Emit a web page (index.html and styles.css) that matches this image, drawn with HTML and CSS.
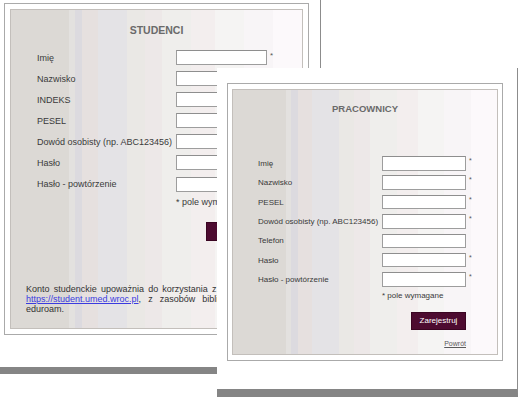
FILE: index.html
```html
<!DOCTYPE html>
<html lang="pl">
<head>
<meta charset="utf-8">
<title>Rejestracja</title>
<link rel="stylesheet" href="styles.css">
</head>
<body>
<div class="window window--students">
  <div class="frame">
    <div class="panel">
      <h2 class="title">STUDENCI</h2>
      <div class="form">
        <label class="lbl">Imię</label><input class="inp" type="text"><span class="req">*</span>
        <label class="lbl">Nazwisko</label><input class="inp" type="text"><span class="req">*</span>
        <label class="lbl">INDEKS</label><input class="inp" type="text"><span class="req">*</span>
        <label class="lbl">PESEL</label><input class="inp" type="text"><span class="req">*</span>
        <label class="lbl">Dowód osobisty (np. ABC123456)</label><input class="inp" type="text"><span class="req">*</span>
        <label class="lbl">Hasło</label><input class="inp" type="text"><span class="req">*</span>
        <label class="lbl">Hasło - powtórzenie</label><input class="inp" type="text"><span class="req">*</span>
      </div>
      <div class="actions">
        <div class="note">* pole wymagane</div>
        <button class="submit" type="button">Zarejestruj</button>
        <a class="back" href="#">Powrót</a>
      </div>
      <p class="info">Konto studenckie upoważnia do korzystania z portalu studenta <a class="link" href="#">https://student.umed.wroc.pl</a>, z zasobów biblioteki oraz sieci eduroam.</p>
    </div>
  </div>
</div>

<div class="window window--staff">
  <div class="frame">
    <div class="panel">
      <h2 class="title">PRACOWNICY</h2>
      <div class="form">
        <label class="lbl">Imię</label><input class="inp" type="text"><span class="req">*</span>
        <label class="lbl">Nazwisko</label><input class="inp" type="text"><span class="req">*</span>
        <label class="lbl">PESEL</label><input class="inp" type="text"><span class="req">*</span>
        <label class="lbl">Dowód osobisty (np. ABC123456)</label><input class="inp" type="text"><span class="req">*</span>
        <label class="lbl">Telefon</label><input class="inp" type="text"><span class="req"></span>
        <label class="lbl">Hasło</label><input class="inp" type="text"><span class="req">*</span>
        <label class="lbl">Hasło - powtórzenie</label><input class="inp" type="text"><span class="req">*</span>
      </div>
      <div class="actions">
        <div class="note">* pole wymagane</div>
        <button class="submit" type="button">Zarejestruj</button>
        <a class="back" href="#">Powrót</a>
      </div>
    </div>
  </div>
</div>
</body>
</html>
```

FILE: styles.css
```css
html, body {
  margin: 0;
  padding: 0;
}
body {
  position: relative;
  width: 526px;
  height: 404px;
  overflow: hidden;
  background: #ffffff;
  font-family: "Liberation Sans", Arial, sans-serif;
  color: #3a3a3a;
}

/* windows placed on the free canvas */
.window {
  position: absolute;
  background: #ffffff;
  border-right: 1px solid #8c8c8c;
  border-bottom-style: solid;
  border-bottom-color: #858585;
}
.window--students {
  left: 0;
  top: 0;
  width: 316px;
  height: 364px;
  padding: 3px 0 0 4px;
  border-bottom-width: 7px;
}
.window--staff {
  left: 217px;
  top: 68px;
  width: 290px;
  height: 306px;
  padding: 15px 0 0 10px;
  border-bottom-width: 8px;
}

.frame {
  box-sizing: border-box;
  border: 1px solid #aaaaaa;
  background: #ffffff;
}
.window--students .frame {
  width: 305px;
  height: 332px;
  padding: 5px;
}
.window--staff .frame {
  width: 276px;
  height: 278px;
  padding: 5px 4px;
}

.panel {
  box-sizing: border-box;
  height: 100%;
  border: 1px solid #c3bfbb;
  background: linear-gradient(to right,
    #dcd9d5 0%, #dcd9d5 20%,
    #e3e1df 20%, #e3e1df 22%,
    #dcdadf 22%, #dcdadf 24.5%,
    #e6e0df 24.5%, #e6e0df 30%,
    #e4e3e6 30%, #e4e3e6 40%,
    #eae8e5 40%, #eae8e5 46%,
    #ede8e8 46%, #ede8e8 52%,
    #efeeec 52%, #efeeec 62%,
    #f3eeee 62%, #f3eeee 70%,
    #f5f4f3 70%, #f5f4f3 80%,
    #f8f5f7 80%, #f8f5f7 90%,
    #fcf9fb 90%, #fcf9fb 100%);
}

.title {
  margin: 0;
  text-align: center;
  font-weight: bold;
  color: #6a6a6a;
}
.window--students .title {
  padding-top: 14px;
  font-size: 10.5px;
  line-height: 12px;
}
.window--staff .title {
  padding-top: 12.5px;
  font-size: 9.5px;
  line-height: 11px;
}

.form {
  display: grid;
  align-items: center;
}
.window--students .form {
  margin: 14px 0 0 26px;
  grid-template-columns: 139px 91px auto;
  row-gap: 6.1px;
  font-size: 9px;
}
.window--staff .form {
  margin: 42.5px 0 0 25px;
  grid-template-columns: 124px 84px auto;
  row-gap: 4.9px;
  font-size: 8px;
}

.lbl {
  white-space: nowrap;
  color: #3a3a3a;
}
.inp {
  box-sizing: border-box;
  width: 100%;
  margin: 0;
  padding: 0;
  border: 1px solid #9d9d9d;
  border-top-color: #8e8e8e;
  background: #ffffff;
  outline: none;
}
.window--students .inp { height: 15px; }
.window--staff .inp { height: 14.5px; }

.req {
  align-self: start;
  margin-left: 3px;
  color: #555555;
}
.window--students .req { font-size: 8px; line-height: 11px; }
.window--staff .req { font-size: 7px; line-height: 10px; }

.actions {
  display: flex;
  flex-direction: column;
  align-items: flex-start;
}
.window--students .actions {
  margin-left: 165px;
  width: 91px;
}
.window--staff .actions {
  margin-left: 149px;
  width: 84px;
}

.note {
  white-space: nowrap;
  color: #3a3a3a;
}
.window--students .note { margin-top: 5.5px; font-size: 9px; line-height: 11px; }
.window--staff .note { margin-top: 4px; font-size: 8px; line-height: 10px; }

.submit {
  align-self: flex-end;
  box-sizing: border-box;
  margin: 0;
  padding: 0;
  border: 1px solid #3a0522;
  background: #4d0b30;
  color: #ffffff;
  font-family: "Liberation Sans", Arial, sans-serif;
}
.window--students .submit {
  margin-top: 14px;
  width: 61px;
  height: 19px;
  padding-left: 8px;
  font-size: 9px;
}
.window--staff .submit {
  margin-top: 11px;
  width: 55px;
  height: 18px;
  font-size: 8px;
}

.back {
  align-self: flex-end;
  color: #5a5a5a;
  text-decoration: underline;
}
.window--students .back { margin-top: 10px; font-size: 8px; line-height: 9px; }
.window--staff .back { margin-top: 9.5px; font-size: 7px; line-height: 9px; }

.info {
  margin: 23.5px 15px 0 15px;
  font-size: 9px;
  line-height: 10px;
  text-align: justify;
  color: #333333;
}
.link {
  color: #3b3bdf;
  text-decoration: underline;
}
```
